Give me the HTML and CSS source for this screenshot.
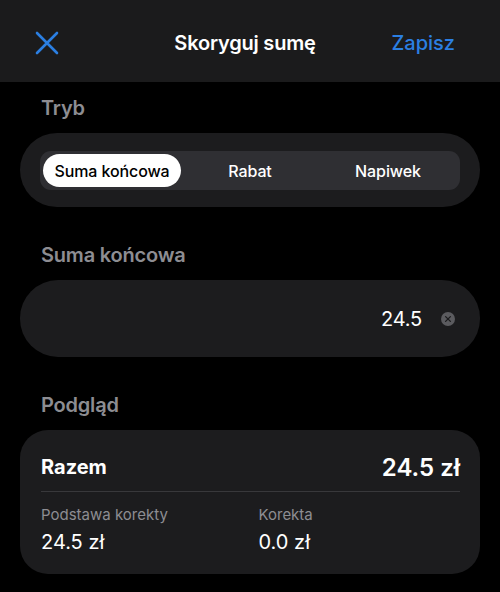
FILE: index.html
```html
<!DOCTYPE html>
<html lang="pl">

<head>
    <meta charset="UTF-8">
    <meta name="viewport" content="width=device-width, initial-scale=1.0">
    <title>Skoryguj sumę</title>
    <link rel="stylesheet" href="styles.css">
</head>

<body>

    <!-- Top bar -->
    <header class="navbar">
        <button class="nav-close" aria-label="Zamknij">
            <svg width="24" height="24" viewBox="0 0 24 24">
                <path d="M2 2 L22 22 M22 2 L2 22" stroke="#2b7fe2" stroke-width="2.6" stroke-linecap="round" fill="none"/>
            </svg>
        </button>
        <div class="nav-title">Skoryguj sumę</div>
        <button class="nav-save">Zapisz</button>
    </header>

    <main class="content">
        <!-- Mode -->
        <div class="section-label">Tryb</div>
        <div class="card card-seg">
            <div class="segmented">
                <div class="segment active">Suma końcowa</div>
                <div class="segment">Rabat</div>
                <div class="segment">Napiwek</div>
            </div>
        </div>

        <!-- Amount -->
        <div class="section-label">Suma końcowa</div>
        <div class="card card-input">
            <span class="input-value">24.5</span>
            <span class="clear-btn">
                <svg width="14" height="14" viewBox="0 0 14 14">
                    <circle cx="7" cy="7" r="7" fill="#5b5b5f"/>
                    <path d="M4.6 4.6 L9.4 9.4 M9.4 4.6 L4.6 9.4" stroke="#1c1c1e" stroke-width="1.3" stroke-linecap="round"/>
                </svg>
            </span>
        </div>

        <!-- Preview -->
        <div class="section-label">Podgląd</div>
        <div class="card card-preview">
            <div class="total-row">
                <span class="total-label">Razem</span>
                <span class="total-value">24.5 zł</span>
            </div>
            <div class="divider"></div>
            <div class="details">
                <div>
                    <div class="detail-label">Podstawa korekty</div>
                    <div class="detail-value">24.5 zł</div>
                </div>
                <div>
                    <div class="detail-label">Korekta</div>
                    <div class="detail-value">0.0 zł</div>
                </div>
            </div>
        </div>
    </main>

</body>

</html>
```

FILE: styles.css
```css
body {
    font-family: Inter, "Noto Sans", sans-serif;
    background-color: #000;
    color: #fff;
    margin: 0;
    padding: 0;
}

.navbar {
    height: 82px;
    background-color: #1b1b1c;
    display: grid;
    grid-template-columns: 1fr auto 1fr;
    align-items: center;
    padding: 4px 45px 0 35px;
    box-sizing: border-box;
}

.nav-close,
.nav-save {
    background: none;
    border: none;
    padding: 0;
    cursor: pointer;
    font-family: inherit;
}

.nav-close {
    justify-self: start;
    display: flex;
}

.nav-title {
    font-size: 20px;
    font-weight: 600;
    letter-spacing: -0.2px;
}

.nav-save {
    justify-self: end;
    color: #2b7fe2;
    font-size: 20px;
    font-weight: 500;
}

.content {
    padding: 0 20px;
}

.section-label {
    color: #8d8d92;
    font-size: 20px;
    font-weight: 600;
    line-height: 24px;
    padding-left: 21px;
    margin-top: 36px;
    margin-bottom: 13px;
    letter-spacing: -0.2px;
}

.section-label:first-child {
    margin-top: 14px;
}

.card {
    background-color: #1c1c1e;
}

.card-seg {
    border-radius: 37px;
    padding: 18px 20px 17px;
}

.segmented {
    display: grid;
    grid-template-columns: 1fr 1fr 1fr;
    background-color: #2f2f33;
    border-radius: 11px;
    padding: 3px;
    height: 39px;
    box-sizing: border-box;
}

.segment {
    display: flex;
    align-items: center;
    justify-content: center;
    font-size: 16px;
    font-weight: 500;
    letter-spacing: -0.1px;
    color: #fff;
    border-radius: 17px;
}

.segment.active {
    background-color: #fff;
    color: #000;
}

.card-input {
    height: 77px;
    border-radius: 38px;
    display: flex;
    align-items: center;
    justify-content: flex-end;
    padding: 0 25px 0 0;
    box-sizing: border-box;
}

.input-value {
    font-size: 20px;
    letter-spacing: -0.2px;
}

.clear-btn {
    display: flex;
    margin-left: 19px;
}

.card-preview {
    border-radius: 28px;
    padding: 23px 20px 20px 21px;
}

.total-row {
    display: flex;
    justify-content: space-between;
    align-items: center;
    height: 28px;
}

.total-label {
    font-size: 20px;
    font-weight: 700;
}

.total-value {
    font-size: 24px;
    font-weight: 600;
}

.divider {
    height: 1px;
    background-color: #38383b;
    margin-top: 10px;
}

.details {
    display: grid;
    grid-template-columns: 1fr 1fr;
    column-gap: 16px;
    margin-top: 13px;
}

.detail-label {
    color: #8d8d92;
    font-size: 15px;
    line-height: 20px;
}

.detail-value {
    font-size: 20px;
    line-height: 24px;
    margin-top: 5px;
}
```
